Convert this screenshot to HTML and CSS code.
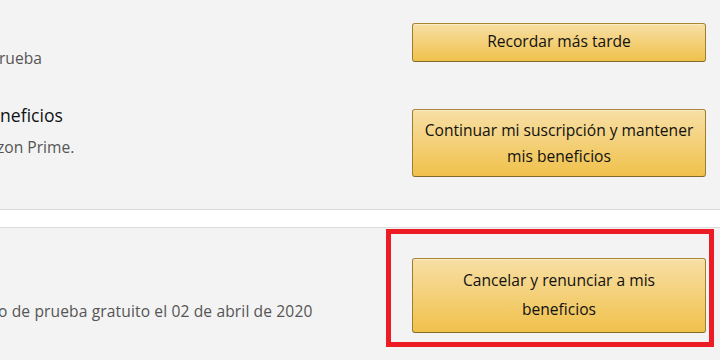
FILE: index.html
```html
<!DOCTYPE html>
<html lang="es">
<head>
<meta charset="utf-8">
<title>Prime</title>
<link rel="stylesheet" href="styles.css">
</head>
<body>
<div class="page">
  <section class="panel">
    <div class="row row-remind">
      <div class="info"><p class="desc">rueba</p></div>
      <div class="action"><button class="btn btn-1">Recordar más tarde</button></div>
    </div>
    <div class="row row-keep">
      <div class="info">
        <h3 class="title">neficios</h3>
        <p class="desc desc-keep">zon Prime.</p>
      </div>
      <div class="action"><button class="btn btn-2">Continuar mi suscripción y mantener<br>mis beneficios</button></div>
    </div>
  </section>
  <div class="divider"></div>
  <section class="panel">
    <div class="row row-cancel">
      <div class="info"><p class="desc desc-cancel">o de prueba gratuito el 02 de abril de 2020</p></div>
      <div class="action highlighted"><button class="btn btn-3">Cancelar y renunciar a mis<br>beneficios</button></div>
    </div>
  </section>
</div>
</body>
</html>
```
FILE: styles.css
```css
* { box-sizing: border-box; }
html, body {
  margin: 0;
  padding: 0;
  background: #f3f3f3;
  width: 720px;
  height: 360px;
  overflow: hidden;
  font-family: "Open Sans", "Noto Sans", Arial, sans-serif;
}
.page { width: 720px; }
.row {
  display: flex;
  align-items: flex-start;
}
.info {
  flex: 1;
  min-width: 0;
  overflow: hidden;
}
.action {
  width: 294px;
  margin-right: 14px;
  flex: none;
  position: relative;
}
.desc {
  margin: 0;
  font-size: 15.6px;
  line-height: 20px;
  color: #555;
  white-space: nowrap;
}
.title {
  margin: 0;
  font-size: 17.6px;
  line-height: 24px;
  font-weight: 400;
  color: #111;
  white-space: nowrap;
}
.row-remind .info { padding-top: 48px; }
.row-remind .desc { text-indent: -1px; }
.row-remind .action { padding-top: 23px; }
.row-keep .info { padding-top: 35px; }
.row-keep .action { padding-top: 41px; }
.desc-keep { margin-top: 10px; text-indent: -3px; }
.divider {
  margin-top: 32px;
  height: 19px;
  background: #fff;
  border-top: 1px solid #dcdcdc;
  border-bottom: 1px solid #dcdcdc;
}
.row-cancel { padding-bottom: 27px; }
.row-cancel .info { padding-top: 73px; }
.row-cancel .action { padding-top: 30px; }
.desc-cancel { text-indent: -2px; letter-spacing: 0.12px; }

.btn {
  display: block;
  width: 100%;
  margin: 0;
  font-family: inherit;
  font-size: 15.6px;
  color: #111;
  text-align: center;
  background: linear-gradient(to bottom, #f7dfa5, #f0c14b);
  border: 1px solid;
  border-color: #a88734 #9c7e31 #846a29;
  border-radius: 3px;
  box-shadow: inset 0 1px 0 rgba(255, 255, 255, 0.4);
  padding: 0 8px;
}
.btn-1 { padding-top: 6px; padding-bottom: 8px; line-height: 23px; }
.btn-2 { padding-top: 7px; padding-bottom: 7px; line-height: 26px; }
.btn-3 { padding-top: 7px; padding-bottom: 8px; line-height: 29px; }

.highlighted::after {
  content: "";
  position: absolute;
  left: -26px;
  right: -8px;
  top: 1px;
  bottom: -14px;
  border: 5px solid #ed1c24;
  pointer-events: none;
}
```
